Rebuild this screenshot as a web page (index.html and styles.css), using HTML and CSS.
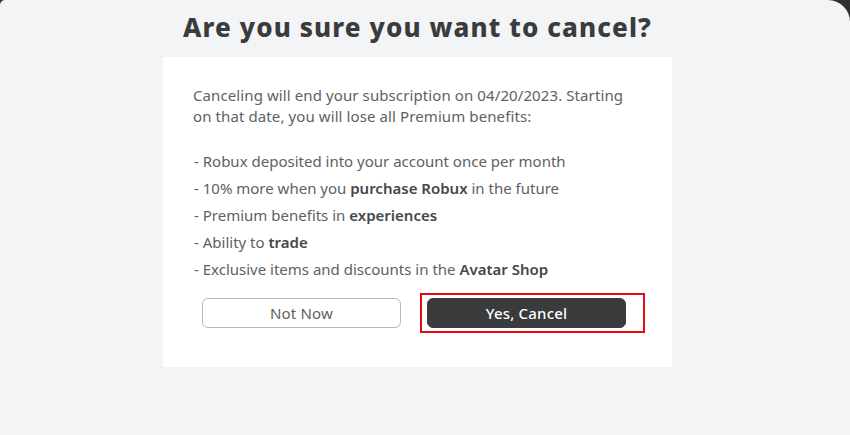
FILE: index.html
```html
<!DOCTYPE html>
<html lang="en">
<head>
<meta charset="utf-8">
<title>Cancel Premium</title>
<link rel="stylesheet" href="styles.css">
</head>
<body>
<div class="page">
  <h1 class="title">Are you sure you want to cancel?</h1>
  <div class="card">
    <p class="intro">Canceling will end your subscription on 04/20/2023. Starting on that date, you will lose all Premium benefits:</p>
    <ul class="benefits">
      <li>- Robux deposited into your account once per month</li>
      <li>- 10% more when you <b>purchase Robux</b> in the future</li>
      <li>- Premium benefits in <b>experiences</b></li>
      <li>- Ability to <b>trade</b></li>
      <li>- Exclusive items and discounts in the <b>Avatar Shop</b></li>
    </ul>
    <div class="actions">
      <button class="btn btn-secondary">Not Now</button>
      <div class="highlight">
        <button class="btn btn-primary">Yes, Cancel</button>
      </div>
    </div>
  </div>
</div>
</body>
</html>
```
FILE: styles.css
```css
html {
  background: #2e2f30;
}
body {
  margin: 0;
  font-family: "Noto Sans", "Open Sans", sans-serif;
}
.page {
  height: 435px;
  background: #f2f4f5;
  border-radius: 5px 22px 0 0;
  display: flex;
  flex-direction: column;
  align-items: center;
  padding-right: 15px;
  box-sizing: border-box;
}
.title {
  margin: 10px 0 13px;
  font-size: 26px;
  line-height: 34px;
  font-weight: 800;
  color: #393b3d;
  letter-spacing: 1.1px;
}
.card {
  width: 509px;
  box-sizing: border-box;
  background: #ffffff;
  padding: 28px 30px 39px;
}
.intro {
  margin: 0;
  max-width: 436px;
  font-size: 15px;
  line-height: 21px;
  letter-spacing: 0.1px;
  color: #606162;
}
.benefits {
  list-style: none;
  margin: 21px 0 0;
  padding: 0 0 0 1px;
  font-size: 15px;
  line-height: 27px;
  color: #606162;
}
.benefits b {
  font-weight: 600;
  color: #45474a;
}
.actions {
  display: flex;
  gap: 26px;
  margin-top: 15px;
  padding-left: 9px;
}
.btn {
  width: 199px;
  height: 30px;
  border-radius: 6px;
  font-family: inherit;
  font-size: 15px;
  letter-spacing: 0.2px;
  cursor: pointer;
}
.btn-secondary {
  background: #ffffff;
  border: 1px solid #b8b8b8;
  color: #606162;
  font-weight: 400;
}
.btn-primary {
  background: #393b3d;
  border: 1px solid #393b3d;
  color: #ffffff;
  font-weight: 500;
}
.highlight {
  position: relative;
}
.highlight::after {
  content: "";
  position: absolute;
  top: -5px;
  bottom: -5px;
  left: -7px;
  right: -19px;
  border: 2px solid #e50914;
  pointer-events: none;
}
```
